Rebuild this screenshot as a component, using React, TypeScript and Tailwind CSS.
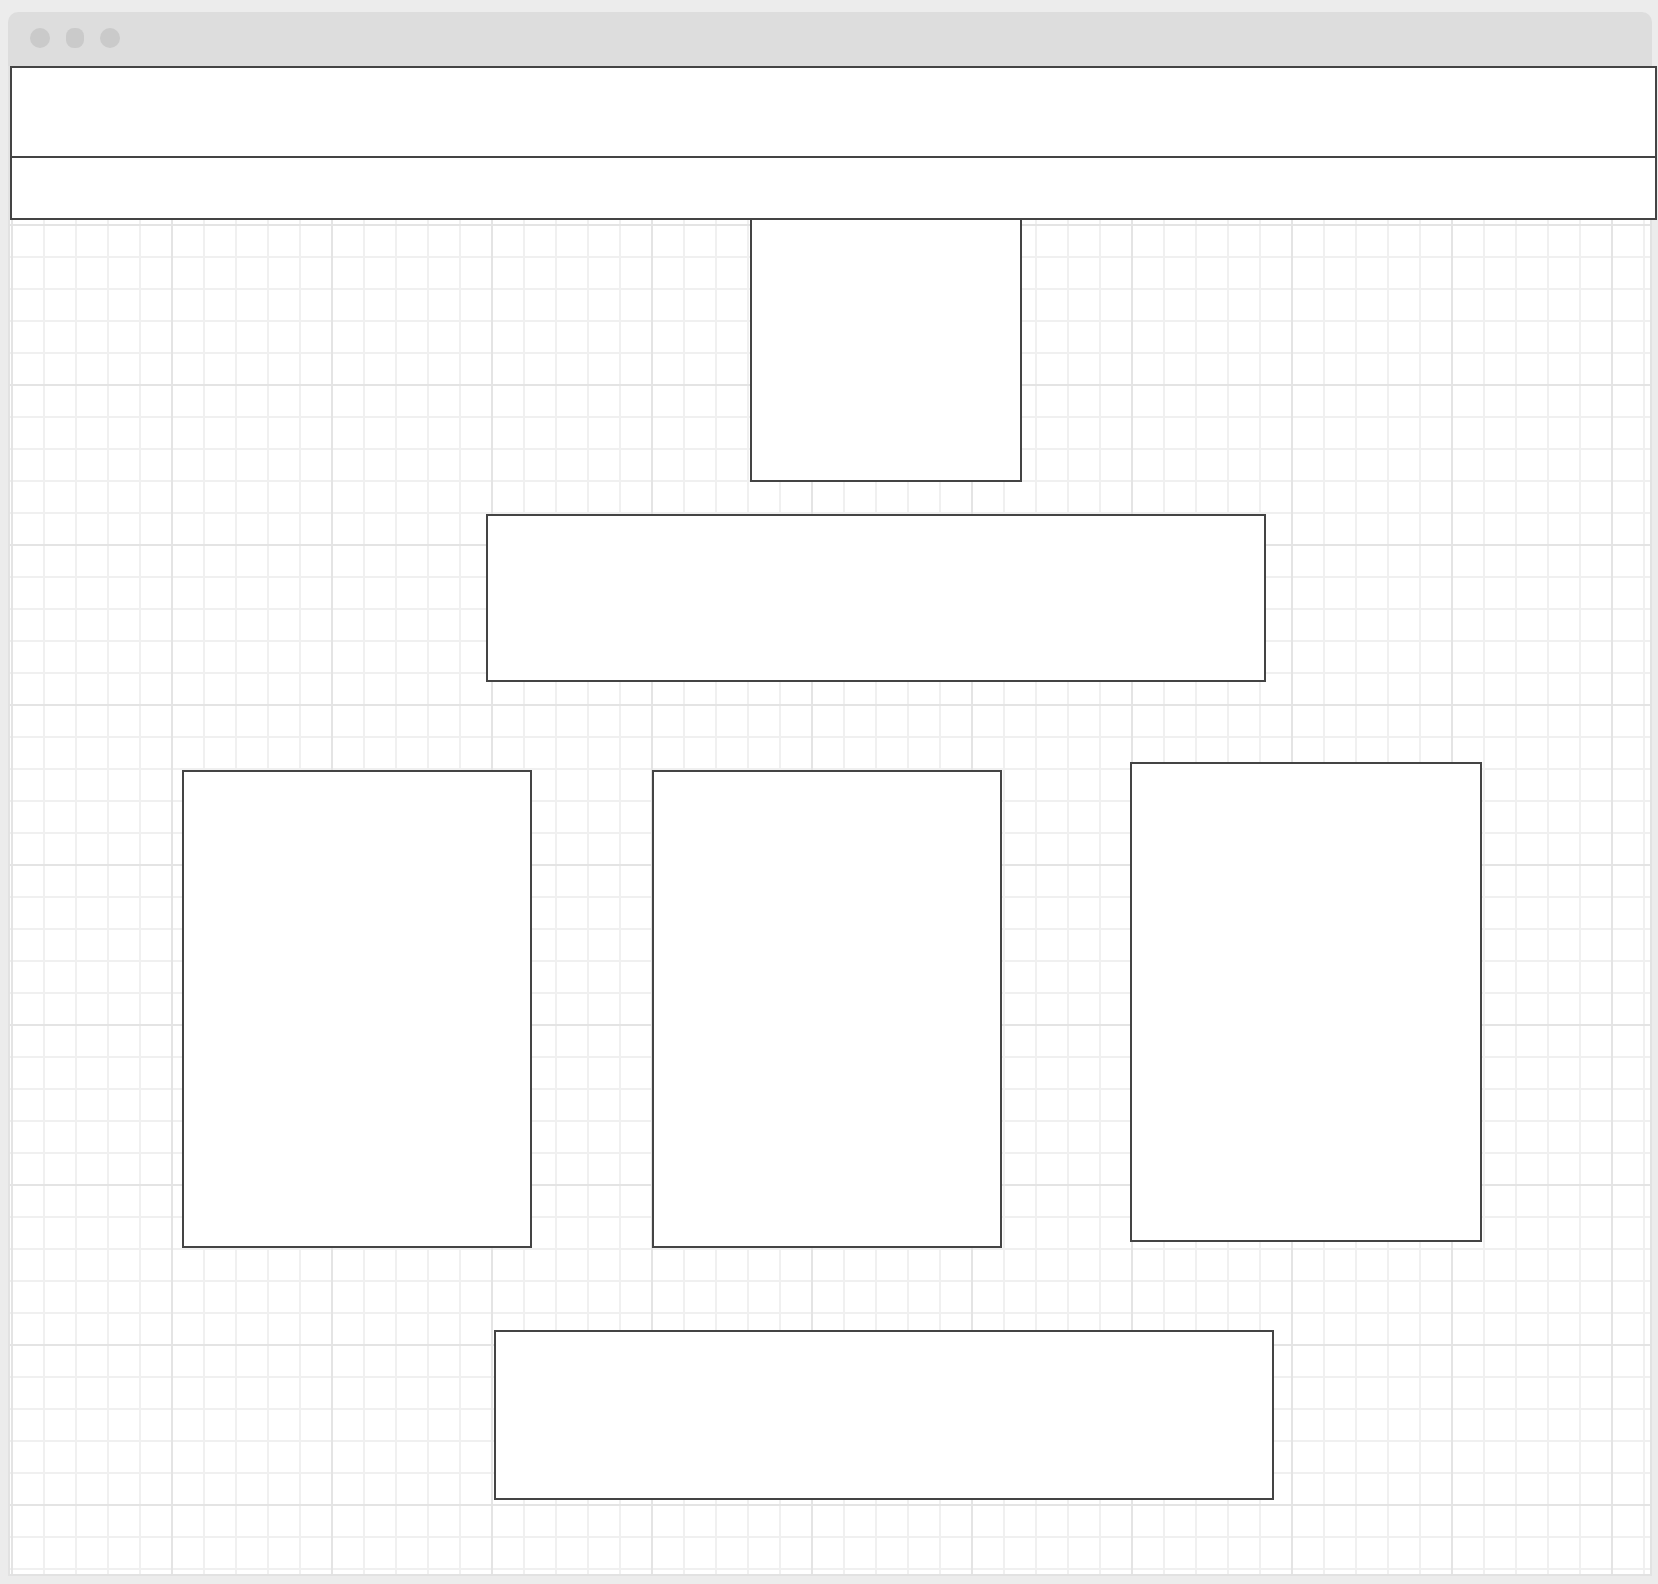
import React from "react";

// wireframe blocks placed on the canvas (coords relative to canvas body)
const blocks = [
  { id: "hero", left: 740, top: 152, w: 272, h: 264 },
  { id: "banner", left: 476, top: 448, w: 780, h: 168 },
  { id: "card-1", left: 172, top: 704, w: 350, h: 478 },
  { id: "card-2", left: 642, top: 704, w: 350, h: 478 },
  { id: "card-3", left: 1120, top: 696, w: 352, h: 480 },
  { id: "footer", left: 484, top: 1264, w: 780, h: 170 },
];

export default function App() {
  return (
    <div className="w-[1658px] h-[1584px] bg-[#ececec] pt-[12px] pl-[8px] font-['Liberation_Sans',sans-serif]">
      <div className="w-[1644px] h-[1564px] flex flex-col">
        {/* window chrome */}
        <div className="h-[54px] shrink-0 bg-[#dddddd] rounded-t-[10px] flex items-start gap-4 pl-[22px] pt-[16px]">
          <span className="w-5 h-5 rounded-full bg-[#cacaca]" />
          <span className="w-[18px] h-5 rounded-[8px] bg-[#cacaca]" />
          <span className="w-5 h-5 rounded-full bg-[#cacaca]" />
        </div>

        {/* canvas */}
        <div className="relative flex-1 border-x-2 border-b-2 border-[#e2e2e2] bg-white bg-[linear-gradient(to_right,#e4e4e4_2px,transparent_2px),linear-gradient(to_bottom,#e4e4e4_2px,transparent_2px),linear-gradient(to_right,#f0f0f0_2px,transparent_2px),linear-gradient(to_bottom,#f0f0f0_2px,transparent_2px)] bg-size-[160px_160px,160px_160px,32px_32px,32px_32px] bg-position-[1px_-2px]">
          {/* top nav */}
          <div className="w-[1647px] border-2 border-[#444444] bg-white">
            <div className="h-[90px] border-b-2 border-[#444444]" />
            <div className="h-[60px]" />
          </div>

          {blocks.map((b) => (
            <div
              key={b.id}
              className="absolute border-2 border-[#444444] bg-white"
              style={{ left: b.left, top: b.top, width: b.w, height: b.h }}
            />
          ))}
        </div>
      </div>
    </div>
  );
}
